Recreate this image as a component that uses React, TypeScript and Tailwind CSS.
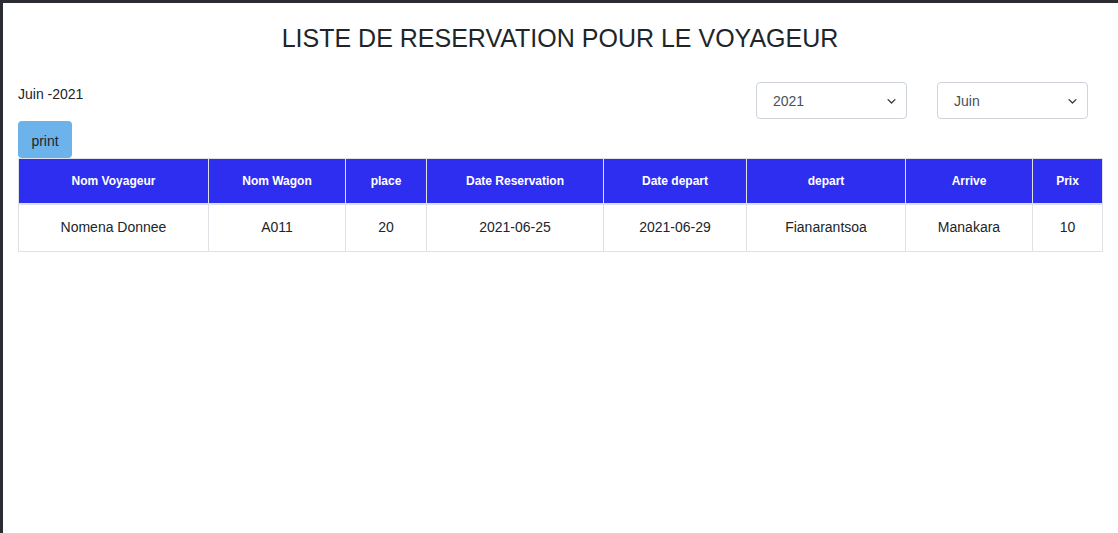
const Chevron = () => (
  <svg
    className="pointer-events-none absolute right-[10px] top-1/2 -translate-y-1/2"
    width="11"
    height="11"
    viewBox="0 0 16 16"
    fill="none"
    stroke="#343a40"
    strokeWidth="2"
    strokeLinecap="round"
    strokeLinejoin="round"
  >
    <path d="M3 6l5 5 5-5" />
  </svg>
);

export default function App() {
  const headers = ["Nom Voyageur", "Nom Wagon", "place", "Date Reservation", "Date depart", "depart", "Arrive", "Prix"];
  const widths = ["w-[190px]", "w-[137px]", "w-[81px]", "w-[177px]", "w-[143px]", "w-[159px]", "w-[127px]", "w-[70px]"];
  const rows = [
    ["Nomena Donnee", "A011", "20", "2021-06-25", "2021-06-29", "Fianarantsoa", "Manakara", "10"],
  ];

  return (
    <div
      className="h-[533px] border-t-[3px] border-l-[3px] border-[#2b2d33] bg-white text-[#212529]"
      style={{ fontFamily: '"Liberation Sans", Arial, sans-serif' }}
    >
      <div className="pl-[15px] pr-[16px]">
        <h1 className="pt-[21px] text-center text-[25px] leading-[28px] text-[#212529]">
          LISTE DE RESERVATION POUR LE VOYAGEUR
        </h1>

        <div className="mt-[30px] flex items-start justify-between">
          <p className="text-[14px] leading-[20px] mt-[2px]">Juin -2021</p>
          <div className="flex gap-[30px] mr-[14px]">
            <div className="relative">
              <select className="h-[37px] w-[151px] appearance-none rounded-[4px] border border-[#ced4da] bg-white pl-[16px] pt-[2px] text-[14px] text-[#495057]">
                <option>2021</option>
              </select>
              <Chevron />
            </div>
            <div className="relative">
              <select className="h-[37px] w-[151px] appearance-none rounded-[4px] border border-[#ced4da] bg-white pl-[16px] pt-[2px] text-[14px] text-[#495057]">
                <option>Juin</option>
              </select>
              <Chevron />
            </div>
          </div>
        </div>

        <button className="mt-[2px] h-[37px] w-[54px] rounded-[4px] bg-[#6cb2eb] pt-[3px] text-[14px] text-[#212529]">
          print
        </button>

        <table className="w-[1085px] table-fixed border-collapse border border-[#dee2e6]">
          <thead>
            <tr className="bg-[#2e2ef0]">
              {headers.map((h, i) => (
                <th
                  key={i}
                  className={`${widths[i]} h-[45px] border-l border-r border-[#dee2e6] border-b-2 text-center text-[12px] font-bold text-white`}
                >
                  {h}
                </th>
              ))}
            </tr>
          </thead>
          <tbody>
            {rows.map((r, i) => (
              <tr key={i}>
                {r.map((c, j) => (
                  <td key={j} className="h-[48px] border border-[#dee2e6] text-center text-[14px] text-[#212529]">
                    {c}
                  </td>
                ))}
              </tr>
            ))}
          </tbody>
        </table>
      </div>
    </div>
  );
}
